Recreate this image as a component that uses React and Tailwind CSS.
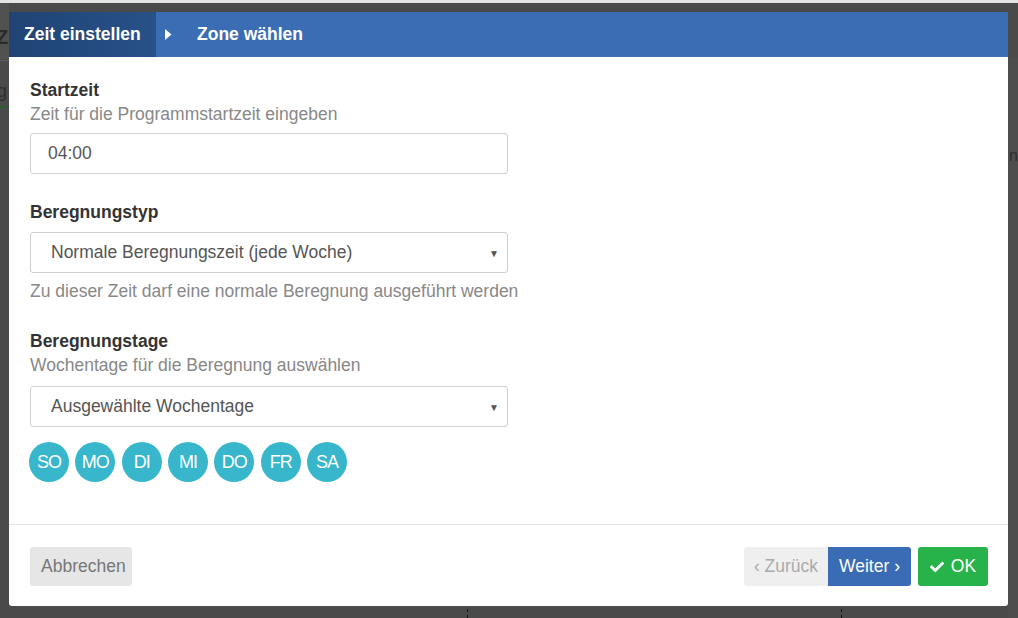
import React from "react";
import { FaCheck } from "react-icons/fa";

const font = { fontFamily: '"Liberation Sans", Arial, sans-serif' };

function Field({ label, help, children, helpAfter }) {
  return (
    <div className="flex flex-col">
      <div className="text-[17.5px] leading-[24px] font-bold text-[#333]">{label}</div>
      {help && <div className="text-[17.5px] leading-[24px] text-[#888]">{help}</div>}
      {children}
      {helpAfter && <div className="mt-[6px] text-[17.5px] leading-[24px] text-[#888]">{helpAfter}</div>}
    </div>
  );
}

function Select({ value, className }) {
  return (
    <div className={"relative w-[478px] h-[41px] border border-[#cfcfcf] rounded-[3px] bg-white flex items-center pl-[20px] text-[17.5px] text-[#555] " + className}>
      {value}
      <span className="absolute right-[8px] top-[13px] text-[10px] text-[#555]">▼</span>
    </div>
  );
}

export default function App() {
  const days = ["SO", "MO", "DI", "MI", "DO", "FR", "SA"];
  return (
    <div className="relative w-[1018px] h-[618px] bg-[#4a4a4a] overflow-hidden" style={font}>
      {/* faint page behind overlay */}
      <div className="absolute left-0 top-0 w-full h-[3px] bg-[#e4e4e4]" />
      <div className="absolute left-0 top-[3px] w-[9px] h-[56px] bg-[#515151]" />
      <div className="absolute left-[-4px] top-[22px] text-[20px] font-bold text-[#2a2a2a]">Z</div>
      <div className="absolute left-0 top-[60px] w-[9px] h-px bg-[#5e5e5e]" />
      <div className="absolute left-[-3px] top-[78px] text-[18px] text-[#2e2e2e]">g</div>
      <div className="absolute left-0 top-[106px] w-[9px] h-[2px] bg-[#2f5a2f]" />
      <div className="absolute right-0 top-[58px] w-[10px] h-[560px] bg-[#4d4d4d]" />
      <div className="absolute left-[1009px] top-[144px] text-[16px] text-[#2f2f2f]">n</div>
      <div className="absolute left-[467px] top-[609px] w-[2px] h-[9px] border-l border-dashed border-[#111]" />
      <div className="absolute left-[841px] top-[609px] w-[2px] h-[9px] border-l border-dashed border-[#111]" />

      <div className="absolute left-[9px] top-[12px] w-[999px] h-[594px] bg-white rounded-b-[3px] flex flex-col">
        {/* header */}
        <div className="h-[45px] bg-[#3b6db5] flex items-center text-white font-bold text-[17.5px]">
          <div className="h-full w-[147px] flex items-center pl-[15px] bg-gradient-to-r from-[#1f4474] to-[#285189]">
            Zeit einstellen
          </div>
          <svg className="ml-[9px]" width="7" height="11" viewBox="0 0 7 11">
            <path d="M0 0 L6.5 5.5 L0 11 Z" fill="white" />
          </svg>
          <div className="ml-[25px]">Zone wählen</div>
        </div>

        {/* body */}
        <div className="pl-[21px] pt-[21px] flex flex-col">
          <Field label="Startzeit" help="Zeit für die Programmstartzeit eingeben">
            <div className="mt-[7px] w-[478px] h-[41px] border border-[#cfcfcf] rounded-[3px] flex items-center pl-[17px] text-[17.5px] text-[#555]">
              04:00
            </div>
          </Field>
          <div className="mt-[26px]">
            <Field label="Beregnungstyp" helpAfter="Zu dieser Zeit darf eine normale Beregnung ausgeführt werden">
              <Select className="mt-[8px]" value="Normale Beregnungszeit (jede Woche)" />
            </Field>
          </div>
          <div className="mt-[26px]">
            <Field label="Beregnungstage" help="Wochentage für die Beregnung auswählen">
              <Select className="mt-[9px]" value="Ausgewählte Wochentage" />
            </Field>
          </div>
          <div className="mt-[15px] flex gap-[6.33px] -ml-[1px]">
            {days.map((d) => (
              <div
                key={d}
                className="w-[40px] h-[40px] rounded-full bg-[#38b6cc] text-white text-[18px] tracking-[-1px] flex items-center justify-center"
              >
                {d}
              </div>
            ))}
          </div>
        </div>

        <div className="mt-[42px] h-px bg-[#e3e3e3]" />

        {/* footer */}
        <div className="flex items-center justify-between pl-[21px] pr-[20px] pt-[22px]">
          <div className="h-[39px] w-[102px] bg-[#e6e6e6] rounded-[3px] flex items-center pl-[11px] text-[17.5px] text-[#777]">
            Abbrechen
          </div>
          <div className="flex items-center">
            <div className="h-[39px] w-[84px] bg-[#efefef] rounded-l-[3px] flex items-center justify-center text-[17.5px] text-[#aaa]">
              ‹ Zurück
            </div>
            <div className="h-[39px] w-[83px] bg-[#3a6cb5] rounded-r-[3px] flex items-center justify-center text-[17.5px] text-white">
              Weiter ›
            </div>
            <div className="ml-[7px] h-[39px] w-[70px] bg-[#27b34a] rounded-[3px] flex items-center justify-center gap-[7px] text-[17.5px] text-white">
              <FaCheck className="w-[14px] h-[14px]" />
              OK
            </div>
          </div>
        </div>
      </div>
    </div>
  );
}
